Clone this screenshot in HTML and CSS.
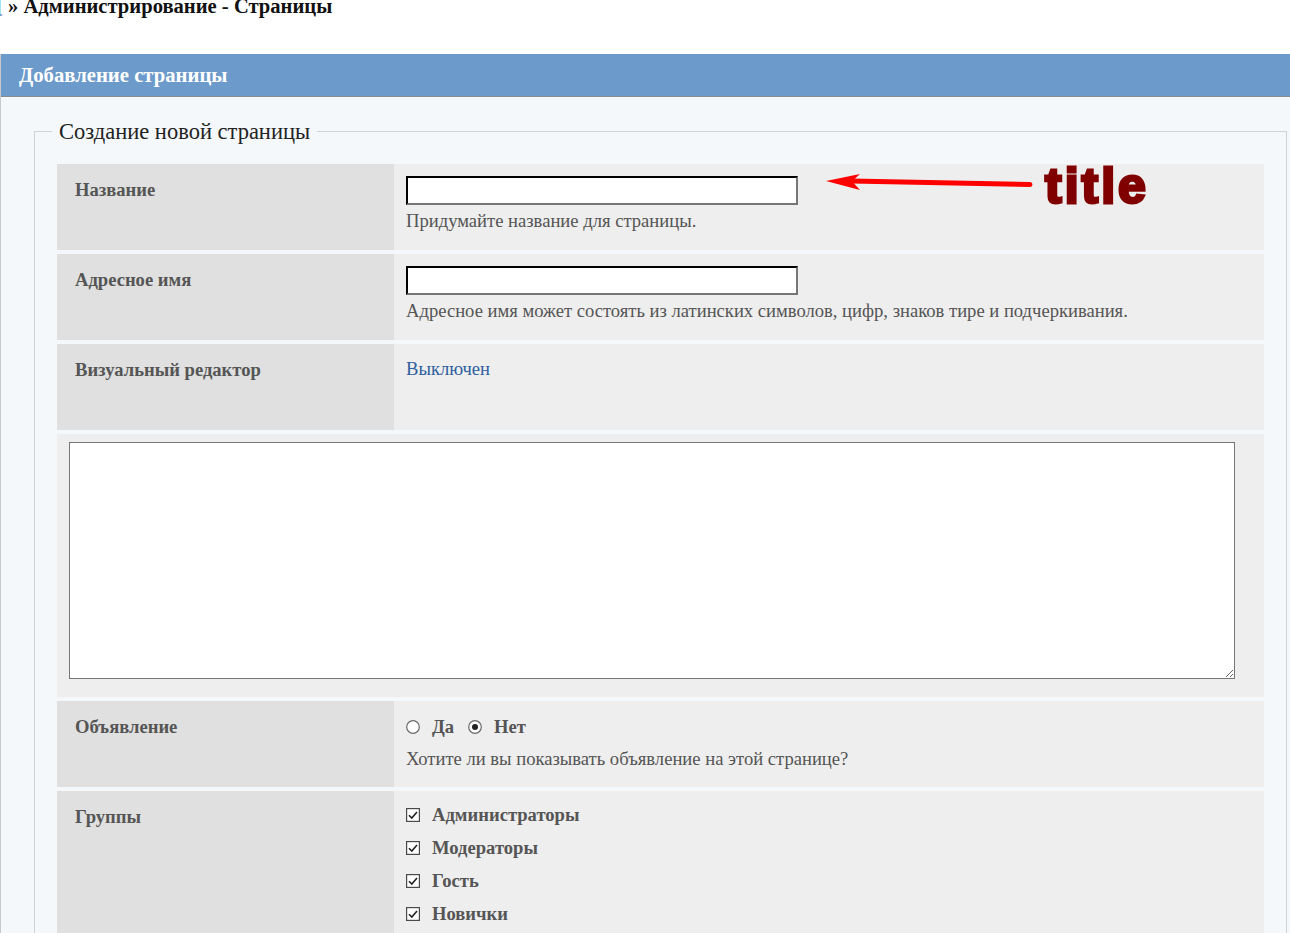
FILE: index.html
```html
<!DOCTYPE html>
<html lang="ru">
<head>
<meta charset="utf-8">
<title>Администрирование - Страницы</title>
<link rel="stylesheet" href="styles.css">
</head>
<body>
<h1 class="crumbs"><span class="crumb-link">[</span> » Администрирование - Страницы</h1>

<div class="box">
  <div class="box-head">Добавление страницы</div>
  <div class="box-body">
    <fieldset class="fs">
      <legend class="fs-legend">Создание новой страницы</legend>
      <div class="form-grid">
        <div class="lbl">Название</div>
        <div class="val val-annot">
          <input class="txt" type="text">
          <div class="hint">Придумайте название для страницы.</div>
          <div class="annot">
            <svg class="arrow" width="210" height="20" viewBox="0 0 210 20">
              <path d="M26 7 L205 10.5" stroke="#ff0000" stroke-width="5" stroke-linecap="round" fill="none"/>
              <path d="M1 7 L35 0 L27 7.3 L35 16 Z" fill="#ff0000"/>
            </svg>
            <span class="annot-text">title</span>
          </div>
        </div>

        <div class="lbl">Адресное имя</div>
        <div class="val">
          <input class="txt" type="text">
          <div class="hint">Адресное имя может состоять из латинских символов, цифр, знаков тире и подчеркивания.</div>
        </div>

        <div class="lbl">Визуальный редактор</div>
        <div class="val"><a class="link" href="#">Выключен</a></div>

        <div class="full"><textarea class="area"></textarea></div>

        <div class="lbl">Объявление</div>
        <div class="val">
          <div class="opts">
            <label class="opt">
              <svg class="mark" width="14" height="14" viewBox="0 0 14 14"><circle cx="7" cy="7" r="6.3" fill="#fff" stroke="#6a6a6a" stroke-width="1.2"/></svg>
              Да</label>
            <label class="opt">
              <svg class="mark" width="14" height="14" viewBox="0 0 14 14"><circle cx="7" cy="7" r="6.3" fill="#fff" stroke="#6a6a6a" stroke-width="1.2"/><circle cx="7" cy="7" r="3" fill="#222"/></svg>
              Нет</label>
          </div>
          <div class="hint">Хотите ли вы показывать объявление на этой странице?</div>
        </div>

        <div class="lbl lbl-tall">Группы</div>
        <div class="val">
          <label class="chk"><svg class="mark" width="14" height="14" viewBox="0 0 14 14"><rect x="0.6" y="0.6" width="12.8" height="12.8" fill="#fff" stroke="#4a4a4a" stroke-width="1.2"/><path d="M3 7.2 L5.8 10 L11 4" stroke="#222" stroke-width="1.6" fill="none"/></svg> Администраторы</label>
          <label class="chk"><svg class="mark" width="14" height="14" viewBox="0 0 14 14"><rect x="0.6" y="0.6" width="12.8" height="12.8" fill="#fff" stroke="#4a4a4a" stroke-width="1.2"/><path d="M3 7.2 L5.8 10 L11 4" stroke="#222" stroke-width="1.6" fill="none"/></svg> Модераторы</label>
          <label class="chk"><svg class="mark" width="14" height="14" viewBox="0 0 14 14"><rect x="0.6" y="0.6" width="12.8" height="12.8" fill="#fff" stroke="#4a4a4a" stroke-width="1.2"/><path d="M3 7.2 L5.8 10 L11 4" stroke="#222" stroke-width="1.6" fill="none"/></svg> Гость</label>
          <label class="chk"><svg class="mark" width="14" height="14" viewBox="0 0 14 14"><rect x="0.6" y="0.6" width="12.8" height="12.8" fill="#fff" stroke="#4a4a4a" stroke-width="1.2"/><path d="M3 7.2 L5.8 10 L11 4" stroke="#222" stroke-width="1.6" fill="none"/></svg> Новички</label>
        </div>
      </div>
    </fieldset>
  </div>
</div>
</body>
</html>
```

FILE: styles.css
```css
html, body {
  margin: 0;
  padding: 0;
  background: #ffffff;
  overflow: hidden;
}

body {
  font-family: "Liberation Serif", "Times New Roman", serif;
  color: #555555;
  width: 1290px;
  height: 933px;
}

.crumbs {
  font-size: 20.6px;
  font-weight: bold;
  color: #111111;
  margin: -5px 0 0 0;
  padding: 0;
  line-height: 22px;
  height: 59px;
}

.crumb-link {
  color: #2a4f9e;
  margin-left: -4px;
}

.box {
  width: 1340px;
  background: #f5f8fb;
  border-left: 1px solid #c8c8c8;
}

.box-head {
  background: #6c9acb;
  color: #ffffff;
  font-weight: bold;
  font-size: 20.7px;
  line-height: 42px;
  padding-left: 18px;
  border-bottom: 1px solid #8a8a8a;
  box-sizing: border-box;
  height: 43px;
}

.box-body {
  padding: 23px 0 0 33px;
}

.fs {
  width: 1208px;
  margin: 0;
  padding: 21px 21px 0 22px;
  border: 1px solid #cfd3d6;
  border-bottom: none;
  min-inline-size: 0;
}

.fs-legend {
  font-size: 22.5px;
  color: #222222;
  padding: 0 7px;
  margin-left: -5px;
  line-height: 23px;
}

.form-grid {
  display: grid;
  grid-template-columns: 337px 870px;
  row-gap: 4px;
}

.lbl {
  background: #dfe0df;
  font-weight: bold;
  font-size: 18.6px;
  color: #555555;
  padding: 15px 18px 0 18px;
  height: 86px;
  box-sizing: border-box;
}

.lbl-tall {
  height: auto;
  min-height: 150px;
}

.val {
  background: #eeeeee;
  padding: 12px 12px 0 12px;
  min-height: 86px;
  box-sizing: border-box;
  font-size: 18.6px;
}

.val-annot {
  position: relative;
}

.txt {
  display: block;
  width: 392px;
  height: 29px;
  box-sizing: border-box;
  margin: 0;
  border: 2px inset #767676;
  border-top-color: #222222;
  border-left-color: #222222;
  background: #ffffff;
}

.hint {
  margin-top: 5px;
  font-size: 18.6px;
  color: #555555;
  line-height: 22px;
}

.link {
  color: #2f5f9e;
  text-decoration: none;
  display: inline-block;
  margin-top: 2px;
}

.full {
  grid-column: 1 / 3;
  background: #eeeeee;
  padding: 8px 12px 18px 12px;
}

.area {
  display: block;
  width: 1166px;
  height: 237px;
  box-sizing: border-box;
  margin: 0;
  border: 1px solid #767676;
  background: #ffffff;
}

.opts {
  display: flex;
  gap: 14px;
  margin-top: 3px;
}

.opt, .chk {
  font-weight: bold;
  font-size: 18.6px;
  color: #555555;
  display: flex;
  align-items: center;
}

.mark {
  flex: none;
  margin-right: 12px;
}

.opts + .hint {
  margin-top: 10px;
}

.chk {
  height: 33px;
}

.chk:first-child {
  margin-top: -5px;
}

.annot {
  position: absolute;
  left: 431px;
  top: 0;
  display: flex;
  align-items: flex-start;
}

.arrow {
  margin-top: 10px;
}

.annot-text {
  font-family: "Liberation Sans", Arial, sans-serif;
  font-weight: bold;
  font-size: 50px;
  color: #800000;
  -webkit-text-stroke: 3px #800000;
  letter-spacing: 3px;
  line-height: 56px;
  margin-left: 10px;
  margin-top: -6px;
}
```
